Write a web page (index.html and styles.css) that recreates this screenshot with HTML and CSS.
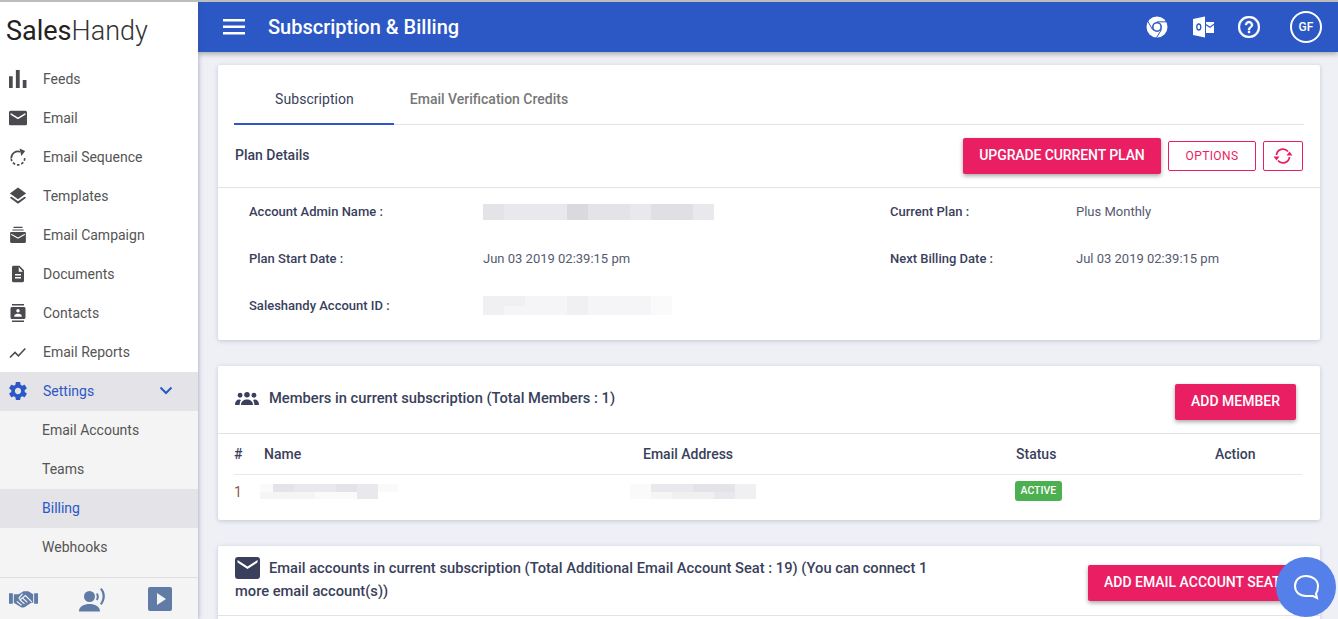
FILE: index.html
```html
<!DOCTYPE html>
<html lang="en">
<head>
<meta charset="utf-8">
<title>Subscription &amp; Billing</title>
<link rel="stylesheet" href="styles.css">
</head>
<body>
<div class="app">
  <aside class="sidebar">
    <div class="logo"><b>Sales</b>Handy</div>
    <nav class="nav">
      <a class="nav-item"><svg class="ico" viewBox="4 3.500 17 17"><path d="M4 9.500h3.500V21H4zM10.500 3h3.600v18h-3.600zM17 13h3.500v8H17z"/></svg><span>Feeds</span></a>
      <a class="nav-item"><svg class="ico" viewBox="1 1 22 22"><path d="M21 3H3c-1.100 0-2 .9-2 2v14c0 1.100.9 2 2 2h18c1.100 0 2-.9 2-2V5c0-1.100-.9-2-2-2zm0 5l-9 5.500L3 8V6l9 5.500L21 6v2z"/></svg><span>Email</span></a>
      <a class="nav-item"><svg class="ico" viewBox="0 0 24 24"><path class="line" d="M3 13.500A9 9 0 0 1 15 5"/><path class="dash" d="M21 13.500A9 9 0 0 1 3 13.500"/><path d="M14 .5l7.500 3.500-5 6.500z"/></svg><span>Email Sequence</span></a>
      <a class="nav-item"><svg class="ico" viewBox="1 1 22 22"><path d="M12 18.540l-8-5.730L2 14.070l10 7.500 10-7.500-2-1.270-8 5.740zM12 16l8-5.730L22 9 12 1.500 2 9l2 1.270L12 16z"/></svg><span>Templates</span></a>
      <a class="nav-item"><svg class="ico" viewBox="0 0 24 24"><path d="M6 1h12v1.500H6zM4.500 4.500h15V6h-15zM21 8H3c-.8 0-1.500.7-1.500 1.500V21c0 .8.700 1.500 1.500 1.500h18c.8 0 1.500-.7 1.500-1.500V9.500C22.500 8.700 21.800 8 21 8zm0 4l-9 5-9-5v-1.800l9 5 9-5V12z"/></svg><span>Email Campaign</span></a>
      <a class="nav-item"><svg class="ico" viewBox="0 0 24 24"><path d="M14 1H6C4.900 1 4 1.900 4 3v18c0 1.100.9 2 2 2h12c1.100 0 2-.9 2-2V7l-6-6zm2 17H8v-2h8v2zm0-4H8v-2h8v2zm-3-5V2.500L18.500 9H13z"/></svg><span>Documents</span></a>
      <a class="nav-item"><svg class="ico" viewBox="0 0 24 24"><path d="M20 0H4v2h16V0zM4 24h16v-2H4v2zM20 4H4c-1.100 0-2 .9-2 2v12c0 1.100.9 2 2 2h16c1.100 0 2-.9 2-2V6c0-1.100-.9-2-2-2zm-8 2.750c1.240 0 2.250 1.010 2.250 2.250s-1.010 2.250-2.250 2.250S9.750 10.240 9.750 9 10.760 6.750 12 6.750zM17 17H7v-1.500c0-1.670 3.330-2.500 5-2.500s5 .83 5 2.500V17z"/></svg><span>Contacts</span></a>
      <a class="nav-item"><svg class="ico" viewBox="0 0 24 24"><path d="M.5 18.500l7.500-7.500 4.500 4.500 8.500-9 1.500 1.500-10 10.500-4.500-4.500-6 6z"/></svg><span>Email Reports</span></a>
      <a class="nav-item is-open"><svg class="ico" viewBox="2 2 20 20"><path d="M19.430 12.980c.04-.32.07-.64.07-.98s-.03-.66-.07-.98l2.110-1.650c.19-.15.24-.42.12-.64l-2-3.460c-.12-.22-.39-.3-.61-.22l-2.490 1c-.52-.4-1.080-.73-1.690-.98l-.38-2.650C14.460 2.180 14.250 2 14 2h-4c-.25 0-.46.18-.49.42l-.38 2.650c-.61.25-1.170.59-1.690.98l-2.490-1c-.23-.09-.49 0-.61.22l-2 3.460c-.13.22-.07.49.12.64l2.110 1.650c-.04.32-.07.65-.07.98s.03.66.07.98l-2.110 1.650c-.19.15-.24.42-.12.64l2 3.460c.12.22.39.3.61.22l2.490-1c.52.4 1.080.73 1.690.98l.38 2.650c.03.24.24.42.49.42h4c.25 0 .46-.18.49-.42l.38-2.650c.61-.25 1.170-.59 1.690-.98l2.490 1c.23.09.49 0 .61-.22l2-3.460c.12-.22.07-.49-.12-.64l-2.110-1.650zM12 15.500c-1.930 0-3.500-1.570-3.500-3.500s1.570-3.500 3.500-3.500 3.500 1.570 3.500 3.500-1.570 3.500-3.500 3.500z"/></svg><span>Settings</span><svg class="chev" viewBox="0 0 14 9"><path d="M1.500 1.500L7 7l5.500-5.500"/></svg></a>
    </nav>
    <div class="subnav">
      <a class="sub-item">Email Accounts</a>
      <a class="sub-item">Teams</a>
      <a class="sub-item is-active">Billing</a>
      <a class="sub-item">Webhooks</a>
      <div class="side-foot">
        <svg class="foot-shake" viewBox="0 0 30 18"><path class="body" d="M0 3h4v11H0zM26 3h4v11h-4zM5 4h5l5-3h5l5 3v9h-2l-7 4.500c-1.500.5-2.500.5-3.500 0L5 13z"/><path class="seam" d="M8 11.500l5 4M11 9.500l5 4.500M14 8l5 4.500M23.500 12l-6.500-6.500-4.500 3.500c-1 .7-2.200 0-2-1.200L14 3.500"/></svg>
        <svg class="foot-voice" viewBox="0 0 28 25"><circle cx="10.500" cy="9.500" r="5.500"/><path d="M0 24.500c0-5.500 5.500-7.500 10.500-7.500s10.500 2 10.500 7.500zM18.500 6c1.800 2 1.800 5.500 0 7.500l-1.500-1c1-1.500 1-4 0-5.500zM22.500 1c4.500 4.500 4.500 12 0 17l-1.500-1.300c3.400-3.800 3.400-10.600 0-14.400z"/></svg>
        <svg class="foot-play" viewBox="0 0 24 24"><path d="M2 0h20a2 2 0 0 1 2 2v20a2 2 0 0 1-2 2H2a2 2 0 0 1-2-2V2a2 2 0 0 1 2-2zm7 6v12l9-6z"/></svg>
      </div>
    </div>
  </aside>

  <div class="content">
    <header class="topbar">
      <svg class="burger" viewBox="0 0 22 16"><path d="M0 0h22v2.500H0zM0 6.500h22V9H0zM0 13h22v2.500H0z"/></svg>
      <h1 class="title">Subscription &amp; Billing</h1>
      <div class="top-actions">
        <svg class="top-ico" viewBox="0 0 22 22"><circle cx="11" cy="11" r="10.500" fill="#fff"/><circle cx="11" cy="11" r="5" fill="#2c58c5"/><circle cx="11" cy="11" r="3.400" fill="#fff"/><path class="cut" d="M11 5.800h9.600M6.500 13.600L2 5.500M15.500 13.600l-5 8"/></svg>
        <svg class="top-ico" viewBox="0 0 22 22"><path fill="#fff" d="M1 3l12-2.500v21L1 19zM14 6h8v1.500l-4 3-4-2.500zM14 9.500l4 2.500 4-3v8h-8z"/><ellipse class="o" cx="6.800" cy="11" rx="2" ry="3"/></svg>
        <svg class="top-ico" viewBox="1 1 22 22"><path class="help" d="M11 18h2v-2h-2v2zm1-17C5.900 1 1 5.900 1 12s4.900 11 11 11 11-4.900 11-11S18.100 1 12 1zm0 20c-5 0-9-4-9-9s4-9 9-9 9 4 9 9-4 9-9 9zm0-15c-2.210 0-4 1.790-4 4h2c0-1.100.9-2 2-2s2 .9 2 2c0 2-3 1.750-3 5h2c0-2.250 3-2.500 3-5 0-2.210-1.790-4-4-4z"/></svg>
        <div class="avatar">GF</div>
      </div>
    </header>

    <main class="main">
      <section class="card card-plan">
        <div class="tabs">
          <a class="tab is-active">Subscription</a>
          <a class="tab">Email Verification Credits</a>
        </div>
        <div class="plan-head">
          <h2 class="plan-title">Plan Details</h2>
          <button class="btn btn-solid btn-upgrade">UPGRADE CURRENT PLAN</button>
          <button class="btn btn-line btn-options">OPTIONS</button>
          <button class="btn btn-line btn-refresh" aria-label="Refresh"><svg viewBox="0 0 20 20"><path d="M3.500 9a6.500 6.500 0 0 1 11.500-3.500M16.500 11A6.500 6.500 0 0 1 5 14.500"/><path class="fill" d="M19.500 9.500h-6l3-4zM.5 10.500h6l-3 4z"/></svg></button>
        </div>
        <div class="plan-body">
          <b class="lbl">Account Admin Name :</b>
          <div class="blur blur-admin"><i class="s3"></i><i class="s2"></i><i class="s2"></i><i class="s2"></i><i class="s5"></i><i class="s3"></i><i class="s3"></i><i class="s2"></i><i class="s4"></i><i class="s4"></i><i class="s2"></i></div>
          <b class="lbl">Current Plan :</b>
          <span class="val">Plus Monthly</span>
          <b class="lbl">Plan Start Date :</b>
          <span class="val">Jun 03 2019 02:39:15 pm</span>
          <b class="lbl">Next Billing Date :</b>
          <span class="val">Jul 03 2019 02:39:15 pm</span>
          <b class="lbl">Saleshandy Account ID :</b>
          <div class="blur blur-id"><i class="s1"></i><i class="s1"></i><i class="s0"></i><i class="s0"></i><i class="s1"></i><i class="s0"></i><i class="s0"></i><i class="s0"></i><i class="s9"></i><i class="s1"></i><i class="s0"></i><i class="s0"></i><i class="s0"></i><i class="s1"></i><i class="s0"></i><i class="s0"></i><i class="s0"></i><i class="s9"></i></div>
          <span></span>
          <span></span>
        </div>
      </section>

      <section class="card card-members">
        <div class="sec-head">
          <svg class="sec-ico" viewBox="0 0 26 14"><circle cx="5.500" cy="3.500" r="2.600"/><circle cx="13" cy="3" r="3"/><circle cx="20.500" cy="3.500" r="2.600"/><path d="M0 14c0-4 2-6 4.500-6 1 0 1.500.2 2 .5C5.500 10 5 12 5 14zM6.500 14c0-4 3-6 6.500-6s6.500 2 6.500 6zM21 14c0-2-.5-4-1.500-5.500.5-.3 1-.5 2-.5 2.500 0 4.500 2 4.500 6z"/></svg>
          <h2 class="sec-title">Members in current subscription (Total Members : 1)</h2>
          <button class="btn btn-solid btn-member">ADD MEMBER</button>
        </div>
        <div class="table">
          <div class="tr th"><span>#</span><span>Name</span><span>Email Address</span><span>Status</span><span>Action</span></div>
          <div class="tr td">
            <span class="idx">1</span>
            <div class="blur blur-name"><i class="s9 narrow"></i><i class="s3"></i><i class="s2"></i><i class="s2"></i><i class="s3"></i><i class="s2"></i><i class="s9"></i><i class="s0 narrow"></i><i class="s0"></i><i class="s0"></i><i class="s9"></i><i class="s9"></i><i class="s2"></i></div>
            <div class="blur blur-mail"><i class="s9"></i><i class="s2"></i><i class="s2"></i><i class="s3"></i><i class="s3"></i><i class="s1"></i><i class="s9"></i><i class="s0"></i><i class="s1"></i><i class="s1"></i><i class="s2"></i><i class="s1"></i></div>
            <span><em class="badge">ACTIVE</em></span>
            <span></span>
          </div>
        </div>
      </section>

      <section class="card card-seats">
        <div class="seat-head">
          <h2 class="sec-title seat-title"><svg class="seat-ico" viewBox="0 0 25 22"><path d="M3 0h19a3 3 0 0 1 3 3v16a3 3 0 0 1-3 3H3a3 3 0 0 1-3-3V3a3 3 0 0 1 3-3zm-.5 5.500l10 6.500 10-6.500V3l-10 6.500L2.500 3z"/></svg>Email accounts in current subscription (Total Additional Email Account Seat : 19) (You can connect 1 more email account(s))</h2>
          <button class="btn btn-solid btn-seat">ADD EMAIL ACCOUNT SEAT</button>
        </div>
      </section>
    </main>
  </div>

  <button class="chat" aria-label="Chat"><svg viewBox="0 0 28 28"><path d="M14 3C7.500 3 3 7 3 13s4.500 10 11 10c2.500 0 4.500 0 7 0l4 2-1-4.500c1.500-2 2-4.500 2-7.500C26 7 20.500 3 14 3z"/></svg></button>
</div>
</body>
</html>
```
FILE: styles.css
```css
* { box-sizing: border-box; }
html, body { margin: 0; height: 100%; }
body { font-family: Roboto, "Liberation Sans", sans-serif; font-size: 14px; color: #3a3f5c; background: #eff0f6; overflow: hidden; }

.app { position: relative; display: flex; height: 619px; overflow: hidden; border-top: 2px solid #bdbdbd; }

.sidebar { width: 198px; flex: none; display: flex; flex-direction: column; background: #fff; box-shadow: 1px 0 4px rgba(60, 70, 110, .35); z-index: 2; }
.logo { height: 58px; padding: 12px 0 0 6px; font-size: 27px; line-height: 34px; font-weight: 300; color: #333; }
.logo b { font-weight: 400; color: #222; }
.nav { display: flex; flex-direction: column; }
.nav-item { display: flex; align-items: center; height: 39px; padding: 0 0 2px 9px; color: #555; }
.ico { width: 18px; height: 18px; flex: none; margin-right: 16px; fill: #4a4a4f; }
.ico .line { fill: none; stroke: #4a4a4f; stroke-width: 2.200; }
.ico .dash { fill: none; stroke: #4a4a4f; stroke-width: 2.200; stroke-dasharray: 3.500 2.500; }
.nav-item.is-open { background: #e3e3e8; color: #2c58c5; }
.is-open .ico { fill: #2c58c5; }
.chev { width: 14px; height: 9px; margin-left: auto; margin-right: 25px; fill: none; stroke: #2c58c5; stroke-width: 2; }

.subnav { flex: 1; display: flex; flex-direction: column; background: #f4f4f4; }
.sub-item { display: flex; align-items: center; height: 39px; padding: 0 0 2px 42px; color: #555; }
.sub-item.is-active { background: #e3e3e8; color: #2c58c5; }
.side-foot { margin-top: 10px; border-top: 1px solid #e0e0e0; flex: 1; display: flex; align-items: center; padding: 1px 26px 0 9px; justify-content: space-between; }
.foot-shake { width: 29px; height: 18px; }
.foot-shake .body { fill: #5f7ba6; }
.foot-shake .seam { fill: none; stroke: #f4f4f4; stroke-width: 1.200; }
.foot-voice { width: 28px; height: 25px; fill: #5f7ba6; }
.foot-play { width: 24px; height: 24px; fill: #5f7ba6; }

.content { flex: 1; min-width: 0; display: flex; flex-direction: column; }
.topbar { flex: none; height: 50px; display: flex; align-items: center; padding: 0 16px 0 25px; background: #2c58c5; box-shadow: 0 2px 5px rgba(0, 0, 0, .3); z-index: 1; position: relative; }
.burger { width: 22px; height: 16px; fill: #fff; margin-right: 23px; }
.title { margin: 0; font-size: 20px; font-weight: 500; color: #fff; }
.top-actions { margin-left: auto; display: flex; align-items: center; }
.top-ico { width: 22px; height: 22px; margin-right: 24px; }
.top-ico .cut { fill: none; stroke: #2c58c5; stroke-width: 1; }
.top-ico .o { fill: none; stroke: #2c58c5; stroke-width: 1.300; }
.top-ico .help { fill: #fff; stroke: #fff; stroke-width: .4; }
.top-ico:nth-child(3) { margin-right: 30px; }
.avatar { width: 32px; height: 32px; border: 2px solid #fff; border-radius: 50%; display: flex; align-items: center; justify-content: center; color: #fff; font-size: 12px; font-weight: 500; }

.main { flex: 1; min-height: 0; padding: 13px 18px 0 20px; display: flex; flex-direction: column; gap: 26px; }
.card { flex: none; background: #fff; border-radius: 2px; box-shadow: 0 1px 4px rgba(60, 70, 110, .25); }

.card-plan { height: 275px; }
.tabs { display: flex; margin: 0 16px; height: 60px; border-bottom: 1px solid #e3e3e3; }
.tab { display: flex; align-items: center; justify-content: center; height: 59px; padding: 8px 0 0; width: 160px; color: #777; font-weight: 500; }
.tab + .tab { width: 190px; }
.tab.is-active { color: #3a3f5c; width: 160px; border-bottom: 2px solid #2c58c5; height: 60px; font-weight: 400; padding: 10px 0 0 1px; letter-spacing: .05px; }
.plan-head { display: flex; align-items: center; height: 63px; padding: 0 17px; border-bottom: 1px solid #e3e3e3; }
.plan-title { margin: 0 auto 2px 0; font-size: 14px; font-weight: 500; color: #3a3f5c; }

.btn { font: 500 14px Roboto, "Liberation Sans", sans-serif; border-radius: 2px; cursor: pointer; }
.btn-solid { border: 0; height: 36px; padding: 0 16px 2px; background: #e91e63; color: #fff; box-shadow: 0 2px 4px rgba(0, 0, 0, .35); }
.btn-line { height: 30px; background: #fff; border: 1px solid #e91e63; color: #e91e63; }
.btn-upgrade { width: 198px; white-space: nowrap; padding: 0 0 2px; margin-top: -1px; letter-spacing: -.1px; }
.btn-options { width: 88px; margin-left: 7px; font-size: 12px; font-weight: 400; letter-spacing: .4px; }
.btn-refresh { width: 40px; margin-left: 7px; padding: 0; display: flex; align-items: center; justify-content: center; }
.btn-refresh svg { width: 20px; height: 20px; fill: none; stroke: #e91e63; stroke-width: 1.800; }
.btn-refresh .fill { fill: #e91e63; stroke: none; }

.plan-body { display: grid; grid-template-columns: 234px 407px 186px 1fr; grid-auto-rows: 47px; padding-left: 31px; align-items: center; font-size: 13px; }
.lbl { font-weight: 500; color: #3a3f5c; }
.val { color: #555a70; }

.blur { display: flex; flex-wrap: wrap; align-content: flex-start; }
.blur i { display: block; flex: none; width: 21px; }
.blur i.narrow { width: 13px; }
.s0 { background: #f5f5f7; }
.s1 { background: #f0f0f3; }
.s2 { background: #e9e9ed; }
.s3 { background: #e4e4e8; }
.s4 { background: #dfdfe4; }
.s5 { background: #dadade; }
.s9 { background: #fafafb; }
.blur-admin { height: 16px; width: 231px; }
.blur-admin i { height: 16px; }
.blur-id { height: 19px; width: 189px; }
.blur-id i { height: 9.500px; }
.blur-name { height: 15px; width: 139px; margin-left: -4px; }
.blur-name i { height: 7.500px; }
.blur-mail { height: 15px; width: 126px; margin-left: -13px; }
.blur-mail i { height: 7.500px; }

.sec-head { display: flex; align-items: center; height: 68px; padding: 0 24px 0 17px; border-bottom: 1px solid #e3e3e3; }
.sec-ico { width: 24px; height: 13px; fill: #3a3f5c; margin: 0 10px 3px 0; }
.sec-title { margin: 0; font-size: 14.700px; line-height: 23px; font-weight: 500; color: #3a3f5c; }
.sec-head .sec-title { margin-bottom: 2px; }
.btn-member { margin-left: auto; width: 121px; padding: 0 0 2px; margin-top: 4px; }

.table { margin: 0 18px 0 16px; }
.tr { display: grid; grid-template-columns: 30px 379px 373px 199px 1fr; align-items: center; }
.th { height: 41px; border-bottom: 1px solid #e8e8e8; font-weight: 500; color: #3a3f5c; }
.td { height: 33px; }
.idx { color: #8a5a44; }
.card-members { height: 154px; }
.badge { display: inline-block; height: 20px; line-height: 20px; margin: 0 0 1px -1px; padding: 0 5.500px; background: #4caf50; color: #fff; border-radius: 3px; font-style: normal; font-size: 10.500px; font-weight: 500; vertical-align: middle; }

.card-seats { height: 100px; }
.seat-head { display: flex; align-items: flex-start; height: 70px; padding: 11px 20px 0 17px; border-bottom: 1px solid #e3e3e3; }
.seat-title { width: 700px; }
.seat-ico { width: 25px; height: 22px; fill: #3a3f5c; margin: 0 9px 0 0; vertical-align: top; }
.btn-seat { margin-left: auto; margin-top: 8px; width: 212px; padding: 0 0 2px 16px; white-space: nowrap; text-align: left; }

.chat { position: absolute; right: 2px; bottom: 2px; width: 60px; height: 60px; padding: 0; border: 0; border-radius: 50%; background: #5580ea; display: flex; align-items: center; justify-content: center; z-index: 3; }
.chat svg { width: 28px; height: 28px; fill: none; stroke: #fff; stroke-width: 2; }
```
